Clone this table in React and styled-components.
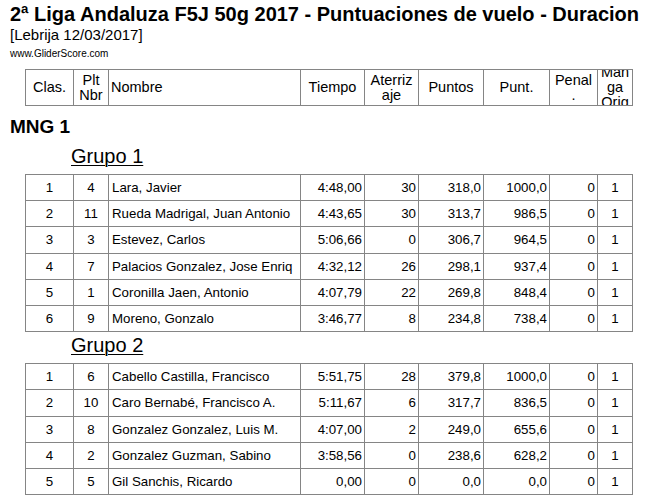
import React from 'react';
import styled, { createGlobalStyle } from 'styled-components';

const GlobalStyle = createGlobalStyle`
  html, body {
    margin: 0;
    padding: 0;
    background: #fff;
  }
  body {
    font-family: "Liberation Sans", Arial, sans-serif;
    color: #000;
  }
`;

const COLS = [48, 35, 192, 64, 54, 65, 66, 48, 35];

const grupos = [
  {
    name: 'Grupo 1',
    rows: [
      ['1', '4', 'Lara, Javier', '4:48,00', '30', '318,0', '1000,0', '0', '1'],
      ['2', '11', 'Rueda Madrigal, Juan Antonio', '4:43,65', '30', '313,7', '986,5', '0', '1'],
      ['3', '3', 'Estevez, Carlos', '5:06,66', '0', '306,7', '964,5', '0', '1'],
      ['4', '7', 'Palacios Gonzalez, Jose Enriq', '4:32,12', '26', '298,1', '937,4', '0', '1'],
      ['5', '1', 'Coronilla Jaen, Antonio', '4:07,79', '22', '269,8', '848,4', '0', '1'],
      ['6', '9', 'Moreno, Gonzalo', '3:46,77', '8', '234,8', '738,4', '0', '1'],
    ],
  },
  {
    name: 'Grupo 2',
    rows: [
      ['1', '6', 'Cabello Castilla, Francisco', '5:51,75', '28', '379,8', '1000,0', '0', '1'],
      ['2', '10', 'Caro Bernabé, Francisco A.', '5:11,67', '6', '317,7', '836,5', '0', '1'],
      ['3', '8', 'Gonzalez Gonzalez, Luis M.', '4:07,00', '2', '249,0', '655,6', '0', '1'],
      ['4', '2', 'Gonzalez Guzman, Sabino', '3:58,56', '0', '238,6', '628,2', '0', '1'],
      ['5', '5', 'Gil Sanchis, Ricardo', '0,00', '0', '0,0', '0,0', '0', '1'],
    ],
  },
];

// alignment of each data column
const ALIGN = ['center', 'center', 'left', 'right', 'right', 'right', 'right', 'right', 'center'];

const Page = styled.div`
  width: 648px;
  height: 504px;
  overflow: hidden;
  padding: 3px 0 0 10px;
  box-sizing: border-box;
`;

const Title = styled.h1`
  margin: 0;
  font-size: 20px;
  line-height: 23px;
  font-weight: bold;
  white-space: nowrap;
`;

const Subtitle = styled.div`
  font-size: 15px;
  line-height: 17px;
`;

const Site = styled.div`
  margin-top: 5px;
  font-size: 10px;
  line-height: 12px;
`;

const Table = styled.table`
  margin-left: 15px;
  border-collapse: collapse;
  table-layout: fixed;
  width: 608px;
  font-family: "Liberation Sans", Arial, sans-serif;
`;

const HeadTable = styled(Table)`
  margin-top: 9px;
`;

const HeadCell = styled.th`
  border: 1px solid #858585;
  padding: 0;
  height: 35px;
  font-size: 14.5px;
  font-weight: normal;
  text-align: ${p => p.$align || 'center'};
`;

const HeadInner = styled.div`
  height: 35px;
  overflow: hidden;
  display: flex;
  align-items: center;
  justify-content: ${p => (p.$align === 'left' ? 'flex-start' : 'center')};
  padding-left: ${p => (p.$align === 'left' ? '2px' : '0')};
  line-height: 15px;
  text-align: ${p => p.$align || 'center'};
`;

const Section = styled.h2`
  margin: 10px 0 0;
  font-size: 19px;
  line-height: 22px;
  font-weight: bold;
`;

const GroupTitle = styled.h3`
  margin: ${p => (p.$first ? '7px' : '2px')} 0 6px 61px;
  font-size: 20px;
  line-height: 23px;
  font-weight: normal;
  text-decoration: underline;
  text-decoration-thickness: 1px;
  text-underline-offset: 2px;
`;

const Cell = styled.td`
  border: 1px solid #858585;
  height: 25.2px;
  padding: 0;
  padding-left: ${p => (p.$align === 'left' ? '3px' : '0')};
  padding-right: ${p => (p.$align === 'right' ? '2px' : '0')};
  font-size: 13.3px;
  text-align: ${p => p.$align};
  white-space: nowrap;
  overflow: hidden;
`;

function ColGroup() {
  return (
    <colgroup>
      {COLS.map((w, i) => (
        <col key={i} style={{ width: w }} />
      ))}
    </colgroup>
  );
}

const headers = [
  { label: 'Clas.' },
  { label: <>Plt<br />Nbr</> },
  { label: 'Nombre', align: 'left' },
  { label: 'Tiempo' },
  { label: <>Aterriz<br />aje</> },
  { label: 'Puntos' },
  { label: 'Punt.' },
  { label: <>Penal<br />.</> },
  { label: <>Man<br />ga<br />Orig</> },
];

function Grupo({ grupo, first }) {
  return (
    <>
      <GroupTitle $first={first}>{grupo.name}</GroupTitle>
      <Table>
        <ColGroup />
        <tbody>
          {grupo.rows.map((row, i) => (
            <tr key={i}>
              {row.map((v, j) => (
                <Cell key={j} $align={ALIGN[j]}>{v}</Cell>
              ))}
            </tr>
          ))}
        </tbody>
      </Table>
    </>
  );
}

export default function App() {
  return (
    <Page>
      <GlobalStyle />
      <Title>2ª Liga Andaluza F5J 50g 2017 - Puntuaciones de vuelo - Duracion</Title>
      <Subtitle>[Lebrija 12/03/2017]</Subtitle>
      <Site>www.GliderScore.com</Site>
      <HeadTable>
        <ColGroup />
        <thead>
          <tr>
            {headers.map((h, i) => (
              <HeadCell key={i} $align={h.align}>
                <HeadInner $align={h.align}>{h.label}</HeadInner>
              </HeadCell>
            ))}
          </tr>
        </thead>
      </HeadTable>
      <Section>MNG 1</Section>
      {grupos.map((g, i) => (
        <Grupo key={g.name} grupo={g} first={i === 0} />
      ))}
    </Page>
  );
}
